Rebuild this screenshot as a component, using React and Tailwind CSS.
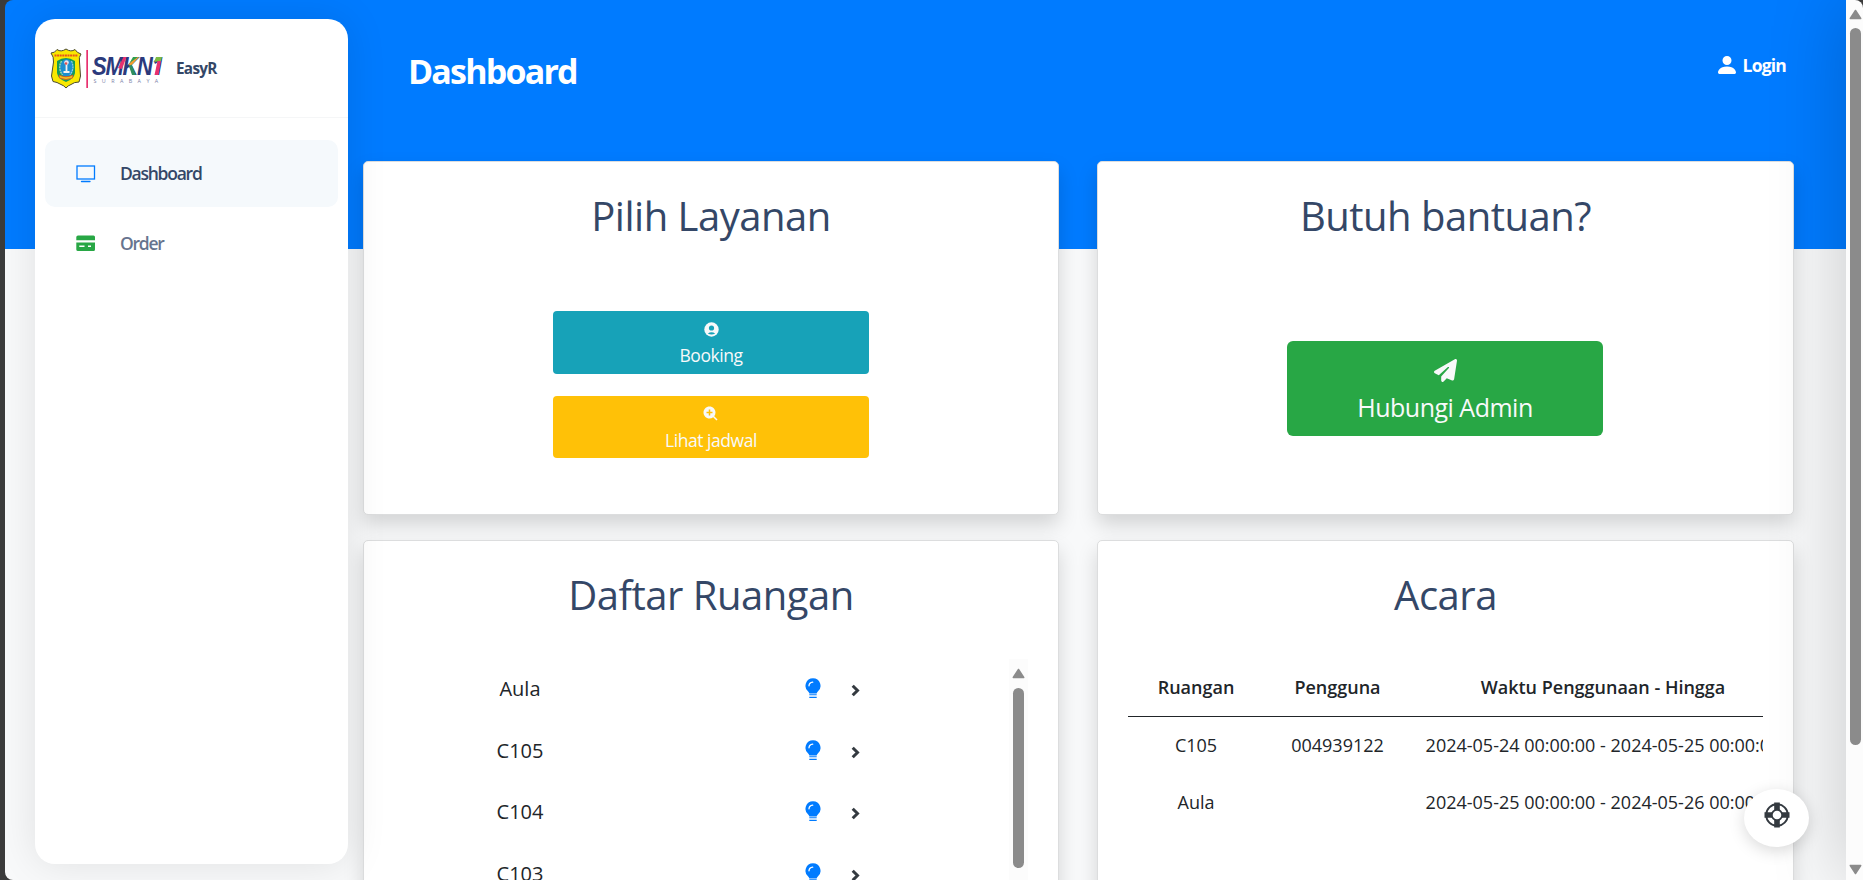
import { BiSolidZoomIn } from "react-icons/bi";
import { FaPaperPlane } from "react-icons/fa6";
import { BsPersonFill } from "react-icons/bs";

const rooms = ["Aula", "C105", "C104", "C103"];
const events = [
  ["C105", "004939122", "2024-05-24 00:00:00 - 2024-05-25 00:00:00"],
  ["Aula", "", "2024-05-25 00:00:00 - 2024-05-26 00:00:00"],
];

function SchoolLogo() {
  return (
    <svg width="120" height="42" viewBox="0 0 120 42">
      <path d="M1 5 Q5 5 7 1.500 Q11 4.500 16 1 Q21 4.500 25 1.500 Q27 5 31 6 Q28.500 9 29.500 14 L30.500 28 L29 34 Q24 34 21 36.500 Q18 37.500 16 40 Q14 37.500 11 36.500 Q7 34 3 33.500 L1.500 28 L3.500 14 Q4 9 1 5Z" fill="#f9e800" stroke="#4a4a30" strokeWidth="1" />
      <path d="M4.500 7.500H28" stroke="#e8541b" strokeWidth="2.200" strokeDasharray="2 .6" />
      <path d="M7 13 Q16 7 25 13 V25 Q24 31 16 34 Q8 31 7 25Z" fill="#159a58" />
      <ellipse cx="16.500" cy="20" rx="7" ry="9" fill="#1d8fd0" />
      <path d="M11.500 13 Q7.500 20 12.500 27" fill="none" stroke="#9fd8b0" strokeWidth="1.400" strokeDasharray="2 .8" />
      <path d="M21.500 13 Q25 20 20 27" fill="none" stroke="#8fd0e8" strokeWidth="1.200" strokeDasharray="2 .8" />
      <path d="M16.500 15 V25 M13.500 24 H19.500" stroke="#f2f2f2" strokeWidth="1.800" />
      <circle cx="16.500" cy="14.500" r="2.300" fill="#e6e6f0" />
      <circle cx="16" cy="15.500" r="1.300" fill="#e05050" />
      <path d="M9 27 Q16 30.500 23 27 L22.500 30 Q16 33 9.500 30Z" fill="#f2c01e" stroke="#d8501e" strokeWidth=".8" />
      <rect x="36.300" y="2" width="1.700" height="38" fill="#e8316f" />
      <text transform="translate(42 26.600) scale(.86 1)" letterSpacing="-1.400" fontFamily="Liberation Sans" fontWeight="700" fontStyle="italic" fontSize="25.500" fill="#2b3a7c">SMKN<tspan fontFamily="Open Sans" letterSpacing="0">1</tspan></text>
      <path d="M68 20 L73.500 9 L76.500 9 L72 21Z" fill="#e8316f" />
      <path d="M78.500 17 L85 9 L89 9 L81 18Z" fill="#f0a030" />
      <path d="M83 9 L88 9 L79.500 15Z" fill="#2e9e4f" />
      <path d="M79 18 L81.500 16.500 L86 27 L82 27Z" fill="#2e8e5f" />
      <path d="M106 9 L112 9 L111 13 L104 14Z" fill="#7dbb42" />
      <path d="M107.500 13 L111 13 L108.500 27 L104.500 27Z" fill="#e8316f" />
      <text x="43.500" y="35" letterSpacing="5.400" fontFamily="Open Sans" fontSize="5.400" fill="#7b82a8">SURABAYA</text>
    </svg>
  );
}

function MonitorIcon() {
  return (
    <svg width="20" height="18" viewBox="0 0 20 18" fill="none" stroke="#007bff">
      <rect x="1" y="1" width="17.500" height="13" strokeWidth="1.300" />
      <path d="M5.500 16.500H14" strokeWidth="1.300" strokeLinecap="round" />
    </svg>
  );
}

function CardIcon() {
  return (
    <svg width="20" height="17" viewBox="0 0 20 17" fill="#28a745">
      <path d="M2 .5H17.500Q19 .5 19 2V5.300H.3V2Q.3 .5 2 .5Z" />
      <path fillRule="evenodd" d="M.3 7.500H19V14.500Q19 16 17.500 16H2Q.3 16 .3 14.500ZM3.300 10.500V12H8.500V10.500ZM12 10.500V12H15V10.500Z" />
    </svg>
  );
}

function UserBadgeIcon() {
  return (
    <svg width="15" height="15" viewBox="0 0 15 15">
      <circle cx="7.500" cy="7.500" r="7.200" fill="#f8f9fa" />
      <circle cx="7.500" cy="6" r="2.600" fill="#17a2b8" />
      <path d="M3.800 11.500Q7.500 8.800 11.200 11.500Q7.500 13.600 3.800 11.500Z" fill="#17a2b8" />
    </svg>
  );
}

function BulbIcon() {
  return (
    <svg width="16" height="21" viewBox="0 0 16 21" fill="none">
      <path d="M8 .3A7.500 7.500 0 0 1 12.600 13.700Q11.700 14.500 11.700 15.600H4.300Q4.300 14.500 3.400 13.700A7.500 7.500 0 0 1 8 .3Z" fill="#007bff" />
      <path d="M4 7.800Q4.200 4.500 7.700 4.200" stroke="#fff" strokeWidth="1.300" strokeLinecap="round" />
      <path d="M4.300 16.300H11.700V17.300H4.300ZM4.300 18.700H11.700V20H4.300Z" fill="#007bff" />
    </svg>
  );
}

function ChevronIcon() {
  return (
    <svg width="9" height="13" viewBox="0 0 9 13" fill="none">
      <path d="M1.700 1.700L6.500 6.500L1.700 11.300" stroke="#343a40" strokeWidth="3" />
    </svg>
  );
}

function LifeRingIcon() {
  return (
    <svg width="26" height="26" viewBox="0 0 26 26" fill="none" stroke="#343a40">
      <circle cx="13" cy="13" r="10.800" strokeWidth="1.900" />
      <circle cx="13" cy="13" r="5.200" strokeWidth="1.800" />
      <path d="M13 .5V8M13 18V25.500M.5 13H8M18 13H25.500" strokeWidth="5.600" />
    </svg>
  );
}

function Arrow({ down }) {
  return (
    <svg width="13" height="11" viewBox="0 0 13 11" className={down ? "rotate-180" : ""}>
      <path d="M6.500 1.500L11.700 9.500H1.300Z" fill="#8b8b8b" stroke="#8b8b8b" strokeWidth="1.500" strokeLinejoin="round" />
    </svg>
  );
}

function Card({ title, className, children }) {
  return (
    <section className={`flex flex-col items-center rounded-[5px] border border-[#dcddde] bg-white shadow-[0_10px_20px_rgba(0,0,0,0.15)] ${className}`}>
      <h2 className="mt-[25px] h-[59px] text-[40px] leading-[58px] tracking-[-0.500px] text-[#344767]">{title}</h2>
      {children}
    </section>
  );
}

export default function App() {
  return (
    <div className="flex h-[880px] w-[1863px] overflow-hidden bg-[#3b3b3b] pl-[5px] font-['Open_Sans',sans-serif] text-[#212529]">
      <div className="relative flex h-full w-[1841px] shrink-0 overflow-hidden rounded-l-lg bg-[linear-gradient(#007bff_249px,#f8f9fa_249px)]">
        <aside className="relative z-10 mt-[19px] ml-[30px] flex h-[845px] w-[313px] shrink-0 flex-col rounded-[20px] bg-white shadow-[0_0_40px_rgba(0,0,0,0.1)]">
          <header className="flex h-[99px] items-center border-b border-[#f5f6f7] pt-[2px] pl-[15px]">
            <SchoolLogo />
            <span className="ml-[6px] -mt-[2px] text-[15.300px] font-bold tracking-[-0.700px] text-[#344767]">EasyR</span>
          </header>
          <nav className="mx-[10px] mt-[22px] flex flex-col gap-[3px] text-[17.500px] font-semibold tracking-[-1.250px]">
            <a className="flex h-[67px] items-center rounded-[10px] bg-[#f5f9fc] pl-[31px] text-[#344767]">
              <MonitorIcon /><span className="ml-[24px]">Dashboard</span>
            </a>
            <a className="flex h-[67px] items-center pl-[31px] text-[#67748e]">
              <CardIcon /><span className="ml-[24px]">Order</span>
            </a>
          </nav>
        </aside>
        <main className="flex min-w-0 flex-1 flex-col pl-[15px]">
          <header className="flex h-[161px] shrink-0 items-start justify-between pl-[45px] pr-[60px] text-white">
            <h1 className="mt-[46px] text-[34px] leading-[50px] font-bold tracking-[-1.800px]">Dashboard</h1>
            <a className="mt-[51px] flex items-center text-[17.500px] leading-[28px] font-bold tracking-[-0.800px]">
              <BsPersonFill size={24} /><span className="ml-[4px]">Login</span>
            </a>
          </header>
          <div className="grid shrink-0 grid-cols-[696px_697px] gap-x-[38px] gap-y-[25px]">
            <Card title="Pilih Layanan" className="h-[354px]">
              <div className="mt-[65px] flex w-[316px] flex-col gap-[22px] text-[17.500px] leading-[26px] tracking-[-0.450px] text-[#f8f9fa]">
                <button className="flex h-[63px] flex-col items-center rounded-[4px] bg-[#17a2b8] pt-[11px]">
                  <UserBadgeIcon /><span className="mt-[5px]">Booking</span>
                </button>
                <button className="flex h-[62px] flex-col items-center rounded-[4px] bg-[#ffc107] pt-[9px]">
                  <BiSolidZoomIn size={18} /><span className="mt-[4px]">Lihat jadwal</span>
                </button>
              </div>
            </Card>
            <Card title="Butuh bantuan?" className="h-[354px]">
              <button className="mt-[95px] mr-px flex h-[95px] w-[316px] flex-col items-center rounded-[6px] bg-[#28a745] pt-[18px] text-[25px] leading-[36px] tracking-[-0.500px] text-[#f8f9fa]">
                <FaPaperPlane size={23} /><span className="mt-[7px]">Hubungi Admin</span>
              </button>
            </Card>
            <Card title="Daftar Ruangan" className="h-[400px]">
              <div className="mt-[34px] flex w-full flex-1 pl-[30px]">
                <ul className="flex w-[615px] flex-col text-[20px]">
                  {rooms.map((r) => (
                    <li key={r} className="flex h-[61.500px] items-center">
                      <span className="-mt-px ml-[65px] w-[122px] text-center">{r}</span>
                      <span className="-mt-[2px] ml-[224px]"><BulbIcon /></span>
                      <span className="mt-[2px] ml-[30px]"><ChevronIcon /></span>
                    </li>
                  ))}
                </ul>
                <div className="flex w-[19px] flex-col items-center bg-[#fcfcfc] pt-[9px]">
                  <Arrow />
                  <div className="mt-[9px] h-[180px] w-[11px] rounded-full bg-[#8b8b8b]" />
                </div>
              </div>
            </Card>
            <Card title="Acara" className="h-[400px]">
              <div className="mt-[34px] ml-[30px] w-[635px] self-start overflow-hidden text-[18px]">
                <div className="grid h-[58px] w-[720px] grid-cols-[136px_147px_384px] items-center border-b border-[#212529] text-center font-semibold">
                  {["Ruangan", "Pengguna", "Waktu Penggunaan - Hingga"].map((h) => <span key={h}>{h}</span>)}
                </div>
                {events.map((e) => (
                  <div key={e[0]} className="grid h-[57px] w-[720px] grid-cols-[136px_147px_384px] items-center text-center whitespace-nowrap">
                    {e.map((c, i) => <span key={i}>{c}</span>)}
                  </div>
                ))}
              </div>
            </Card>
          </div>
        </main>
        <div className="absolute top-0 left-full z-20 h-full w-[100px] shadow-[0_0_80px_rgba(0,0,0,0.2)]" />
        <button className="absolute top-[789px] left-[1739px] z-30 flex h-[58px] w-[65px] items-center justify-center rounded-[50%] bg-white pb-[6px] shadow-[0_4px_16px_rgba(0,0,0,0.15)]">
          <LifeRingIcon />
        </button>
      </div>
      <div className="flex w-[17px] shrink-0 flex-col items-center rounded-tr-lg bg-[#fcfcfc] pt-[9px] pb-[5px] pl-px">
        <Arrow />
        <div className="mt-[8px] h-[717px] w-[11px] rounded-full bg-[#8b8b8b]" />
        <span className="mt-auto"><Arrow down /></span>
      </div>
    </div>
  );
}
